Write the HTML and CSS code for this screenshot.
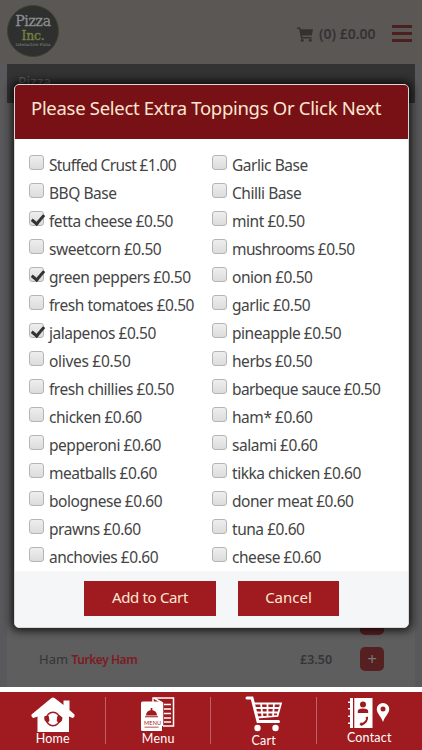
FILE: index.html
```html
<!DOCTYPE html>
<html lang="en">
<head>
<meta charset="utf-8">
<title>Pizza Inc.</title>
<link rel="stylesheet" href="styles.css">
</head>
<body>
<div class="app">
  <header class="top">
    <div class="logo"><span class="logo-a">Pizza</span><span class="logo-b">Inc.</span><span class="logo-c">Interactive Pizza</span></div>
    <div class="basket">
      <svg width="16" height="15" viewBox="0 0 16 15"><path d="M0 0.5H3.2L3.7 2.3H16L14.8 8.6H5L5.3 10H14.6V11.4H4.1L2.1 2H0Z"/><circle cx="5.2" cy="13.2" r="1.5"/><circle cx="13.3" cy="13.2" r="1.5"/></svg>
      <span>(0) £0.00</span>
    </div>
    <div class="burger"><i></i><i></i><i></i></div>
  </header>
  <main class="page">
    <section class="card">
      <h2 class="category"><span>Pizza</span></h2>
      <div class="products">
        <div class="product"><span class="name"></span><span class="price"></span><span class="plus"></span></div>
        <div class="product"><span class="name">Ham <b>Turkey Ham</b></span><span class="price">£3.50</span><span class="plus">+</span></div>
      </div>
    </section>
  </main>
  <nav class="tabs">
    <a class="tab home"><svg width="44" height="36" viewBox="0 0 44 36"><path class="w" d="M20.500 1Q22 0 23.500 1L32.500 8V3.500H38.500V13L43.500 17.500Q44 20 41.500 21L38 19.500V35H6.500V19.500L2.500 21Q0 20 .5 17.500Z"/><circle class="ring" cx="22" cy="22" r="6.700"/><path class="r" d="M13.200 20.500q0-2 1.500-1.500h3l.8 4.500-1.500 2q-3.800-.5-3.800-5zM26.200 19.500l2.200-1.500 3 2.500q.2 4-3.200 5.500l-2.500-2z"/></svg><span>Home</span></a>
    <a class="tab menu"><svg width="34" height="35" viewBox="0 0 34 35"><path class="line" d="M12 5V1H32.500V29H22"/><path class="line" d="M13 1L21.500 6V29M23 7.500h7M23 12h7M23 16.500h7M23 21h7M23 25h7"/><path class="w" d="M1.500 4.500H20Q21 4.500 21 5.500V34H1.500Q0 34 0 32.500V6Q0 4.500 1.500 4.500Z"/><path class="r" d="M4 19.200h13v1H4zM5 18.400a5.500 5.500 0 0 1 11 0zM9.700 11h1.700v3H9.700zM3.500 29.700h14v.7h-14z"/><text x="3" y="28">MENU</text></svg><span>Menu</span></a>
    <a class="tab cart"><svg width="38" height="36" viewBox="0 0 38 36"><path class="cartline" d="M2 2H7L13 25.500H33.500"/><path class="thin" d="M8 7.500H36L32.500 20L11.500 21.500M9.500 12H34.500M11 16.500H33.500M16 7.500L17.500 21M22.500 7.500V21M29 7.500L28 20.500"/><circle class="w" cx="12.500" cy="32" r="3.200"/><circle class="w" cx="30.500" cy="32" r="3.200"/></svg><span>Cart</span></a>
    <a class="tab contact"><svg width="42" height="32" viewBox="0 0 42 32"><path class="w" d="M2 1H5V31H2V27H0V25.500H2V20H0V18.500H2V12.500H0V11H2V6H0V4.500H2ZM6.300 1H24.500V31H6.300Z"/><circle class="r" cx="15" cy="7.500" r="3"/><path class="r" d="M9.800 16v-2q0-2.500 5.200-2.500t5.200 2.500v2zM20 19.500q1 6-6.500 9.500l-2-1.500 1.300-2 2 .2q2.500-1.200 3.300-3.700l-.700-1.500z"/><path class="w" d="M35 6a6.200 6.200 0 0 1 6.200 6.200C41.200 16.500 37 19 35 25C33 19 28.800 16.500 28.800 12.200A6.200 6.200 0 0 1 35 6Z"/><circle class="r" cx="35" cy="12" r="2.500"/></svg><span>Contact</span></a>
  </nav>
  <div class="modal">
    <h1>Please Select Extra Toppings Or Click Next</h1>
    <div class="toppings">
      <label><i class="box"></i><span class="caps">Stuffed Crust £1.00</span></label><label><i class="box"></i><span>Garlic Base</span></label>
      <label><i class="box"></i><span>BBQ Base</span></label><label><i class="box"></i><span>Chilli Base</span></label>
      <label><i class="box on"></i><span>fetta cheese £0.50</span></label><label><i class="box"></i><span>mint £0.50</span></label>
      <label><i class="box"></i><span>sweetcorn £0.50</span></label><label><i class="box"></i><span class="tight">mushrooms £0.50</span></label>
      <label><i class="box on"></i><span>green peppers £0.50</span></label><label><i class="box"></i><span>onion £0.50</span></label>
      <label><i class="box"></i><span>fresh tomatoes £0.50</span></label><label><i class="box"></i><span>garlic £0.50</span></label>
      <label><i class="box on"></i><span>jalapenos £0.50</span></label><label><i class="box"></i><span>pineapple £0.50</span></label>
      <label><i class="box"></i><span class="wide">olives £0.50</span></label><label><i class="box"></i><span>herbs £0.50</span></label>
      <label><i class="box"></i><span>fresh chillies £0.50</span></label><label><i class="box"></i><span class="tight">barbeque sauce £0.50</span></label>
      <label><i class="box"></i><span>chicken £0.60</span></label><label><i class="box"></i><span>ham* £0.60</span></label>
      <label><i class="box"></i><span>pepperoni £0.60</span></label><label><i class="box"></i><span>salami £0.60</span></label>
      <label><i class="box"></i><span>meatballs £0.60</span></label><label><i class="box"></i><span>tikka chicken £0.60</span></label>
      <label><i class="box"></i><span>bolognese £0.60</span></label><label><i class="box"></i><span>doner meat £0.60</span></label>
      <label><i class="box"></i><span>prawns £0.60</span></label><label><i class="box"></i><span>tuna £0.60</span></label>
      <label><i class="box"></i><span>anchovies £0.60</span></label><label><i class="box"></i><span>cheese £0.60</span></label>
    </div>
    <footer class="actions"><a class="add">Add to Cart</a><a class="cancel">Cancel</a></footer>
  </div>
</div>
</body>
</html>
```
FILE: styles.css
```css
* { box-sizing: border-box; }
body { margin: 0; font-family: "Noto Sans", "Open Sans", sans-serif; }
.app { position: relative; width: 422px; height: 750px; overflow: hidden; display: flex; flex-direction: column; background: #59595b; }
.top { height: 64px; flex: none; display: flex; padding-left: 7px; background: #5a5755; }
.logo { width: 52px; height: 52px; margin-top: 5px; border-radius: 50%; border: 1px solid #3c4427; background: #2e2f2f; display: flex; flex-direction: column; align-items: center; font-family: "DejaVu Serif", serif; padding-top: 8px; }
.logo span { display: block; white-space: nowrap; }
.logo-a { font-size: 14px; line-height: 15px; color: #8a8e8e; -webkit-text-stroke: .3px #8a8e8e; letter-spacing: -.3px; }
.logo-b { font-size: 12.500px; line-height: 13px; color: #747f40; -webkit-text-stroke: .4px #747f40; letter-spacing: -.2px; }
.logo-c { font-size: 4.300px; line-height: 6px; color: #858585; letter-spacing: -.1px; }
.basket { display: flex; margin: 24px 0 0 238px; font-weight: 600; font-size: 14px; line-height: 20px; color: #343231; width: 84px; }
.basket svg { fill: #343231; margin-top: 3px; flex: none; }
.basket span { margin-left: 6px; white-space: nowrap; }
.burger { margin: 25px 0 0 11px; width: 20px; display: flex; flex-direction: column; gap: 4px; }
.burger i { height: 3px; background: #4c2020; }
.page { flex: 1; padding: 0 7px; }
.card { height: 100%; background: #5e5e5f; display: flex; flex-direction: column; }
.category { margin: 0; height: 39px; background: #333; color: #5c5c5c; font-size: 14px; font-weight: 400; line-height: 36px; padding: 0 11px; }
.products { margin-top: auto; padding: 0 31px 16px 32px; display: flex; flex-direction: column; gap: 12px; }
.product { height: 24px; display: flex; align-items: center; font-size: 13px; color: #343437; }
.product b { color: #7d1b22; font-weight: 600; font-size: 12px; letter-spacing: -.45px; }
.name { flex: 1; }
.price { font-weight: 600; font-size: 12.500px; width: 60px; color: #353538; }
.plus { width: 24px; height: 24px; border-radius: 5px; background: #572020; color: #777; font-size: 17px; line-height: 23px; text-align: center; }
.tabs { flex: none; height: 63px; border-top: 5px solid #fff; background: #a01b20; display: grid; grid-template-columns: repeat(4, 1fr); }
.tab { display: flex; flex-direction: column; align-items: center; position: relative; color: #fff; font-family: Lato, sans-serif; font-size: 12.500px; line-height: 14px; letter-spacing: .2px; padding-top: 5px; }
.tab:not(:last-child)::after { content: ""; position: absolute; right: 0; top: 5px; width: 1px; height: 47px; background: #bd6165; }
.home span { margin-top: -1px; }
.cart span, .contact span { margin-top: 2px; }
.tab svg { flex: none; }
.cart svg { margin-top: -1px; }
.home svg { margin-bottom: 0; }
.w { fill: #fff; }
.r { fill: #a01b20; }
.ring { fill: none; stroke: #a01b20; stroke-width: 1.500; }
.line { fill: none; stroke: #fff; stroke-width: 1.500; }
.tab text { font: 5.500px Lato, sans-serif; fill: #a01b20; }
.cartline { fill: none; stroke: #fff; stroke-width: 3; stroke-linecap: round; }
.thin { fill: none; stroke: #fff; stroke-width: 1.800; }
.modal { position: absolute; left: 14px; top: 84px; width: 395px; height: 544px; border: 1px solid #ddd8d5; border-radius: 5px; background: #fff; box-shadow: 0 0 9px 3px rgba(0,0,0,.75); display: flex; flex-direction: column; overflow: hidden; }
h1 { margin: 0; height: 54px; flex: none; background: #781115; color: #fbe7d2; font-size: 18.500px; font-weight: 400; line-height: 46px; padding-left: 16px; letter-spacing: -.3px; white-space: nowrap; }
.toppings { flex: 1; padding: 12px 0 0 15px; display: grid; grid-template-columns: 183px 1fr; grid-auto-rows: 28px; }
label { display: flex; font-size: 15.500px; line-height: 28px; color: #444; letter-spacing: -.46px; white-space: nowrap; }
.caps { letter-spacing: -.64px; }
.tight { letter-spacing: -.6px; }
.wide { letter-spacing: -.3px; }
.box { width: 15px; height: 15px; margin: 4px 5px 0 -1px; border: 1px solid #b5b5b5; border-radius: 3px; background: linear-gradient(#eee, #dcdcdc); }
.box.on::after { content: ""; display: block; margin: 0 0 0 4px; width: 5px; height: 10px; border: solid #333; border-width: 0 3px 3px 0; transform: rotate(40deg); }
.actions { height: 58px; flex: none; background: #f5f6f8; display: flex; gap: 22px; padding: 10px 0 0 69px; }
.actions a { height: 35px; background: #a01b20; color: #fbe7d2; font-size: 15px; line-height: 33px; text-align: center; }
.add { width: 132px; letter-spacing: -.35px; }
.cancel { width: 101px; }
```
